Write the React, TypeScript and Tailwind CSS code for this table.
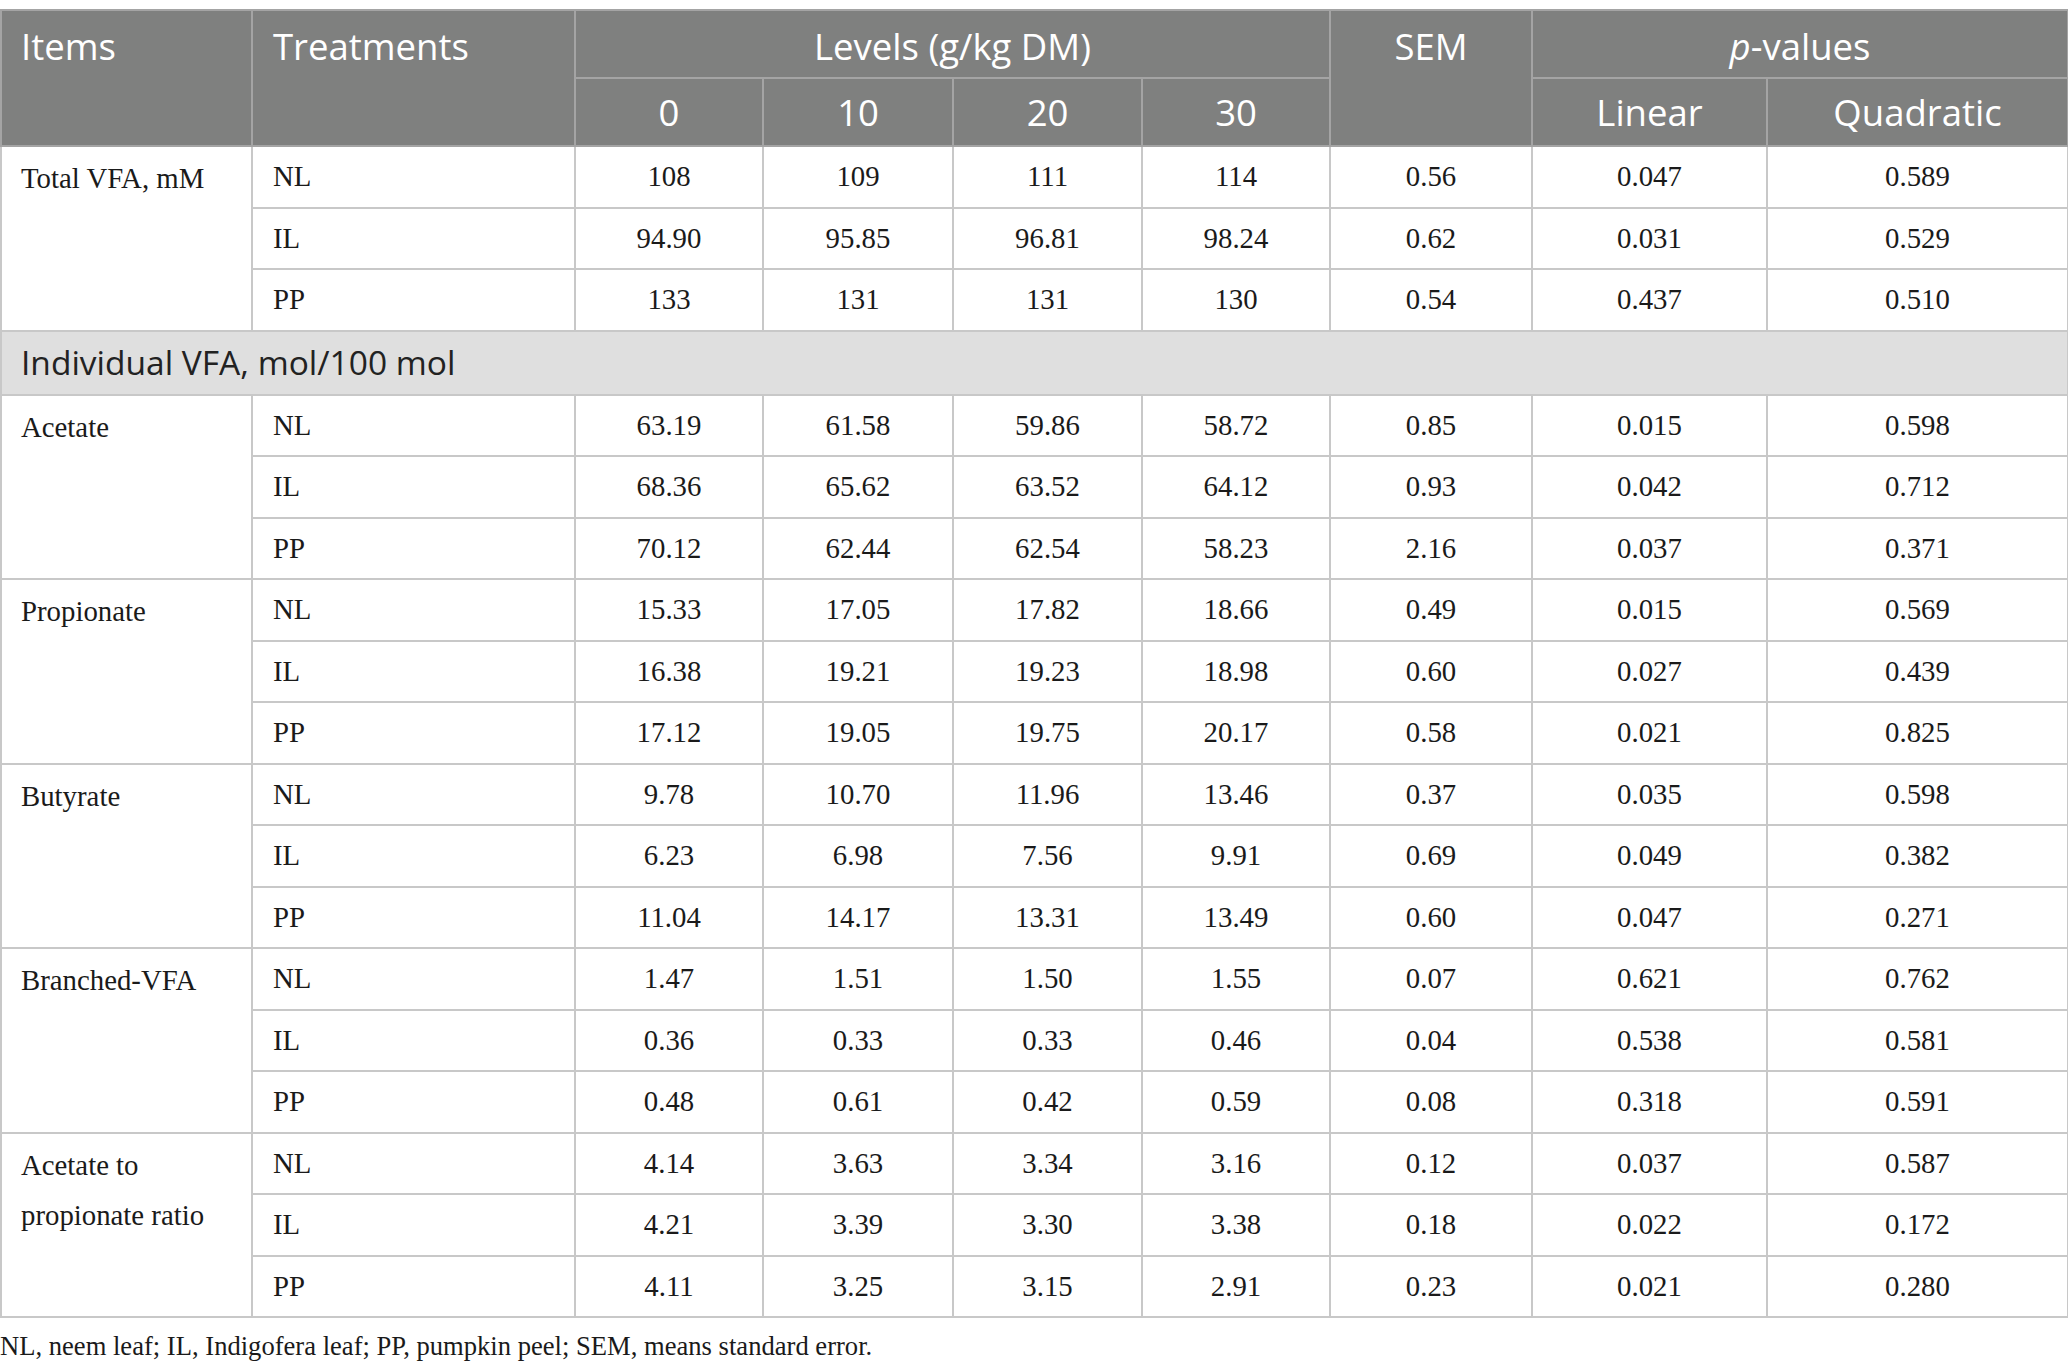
import React from "react";

type Group = { item: string; rows: { t: string; v: string[] }[] };

const TOP: Group[] = [
  {
    item: "Total VFA, mM",
    rows: [
      { t: "NL", v: ["108", "109", "111", "114", "0.56", "0.047", "0.589"] },
      { t: "IL", v: ["94.90", "95.85", "96.81", "98.24", "0.62", "0.031", "0.529"] },
      { t: "PP", v: ["133", "131", "131", "130", "0.54", "0.437", "0.510"] },
    ],
  },
];

const GROUPS: Group[] = [
  {
    item: "Acetate",
    rows: [
      { t: "NL", v: ["63.19", "61.58", "59.86", "58.72", "0.85", "0.015", "0.598"] },
      { t: "IL", v: ["68.36", "65.62", "63.52", "64.12", "0.93", "0.042", "0.712"] },
      { t: "PP", v: ["70.12", "62.44", "62.54", "58.23", "2.16", "0.037", "0.371"] },
    ],
  },
  {
    item: "Propionate",
    rows: [
      { t: "NL", v: ["15.33", "17.05", "17.82", "18.66", "0.49", "0.015", "0.569"] },
      { t: "IL", v: ["16.38", "19.21", "19.23", "18.98", "0.60", "0.027", "0.439"] },
      { t: "PP", v: ["17.12", "19.05", "19.75", "20.17", "0.58", "0.021", "0.825"] },
    ],
  },
  {
    item: "Butyrate",
    rows: [
      { t: "NL", v: ["9.78", "10.70", "11.96", "13.46", "0.37", "0.035", "0.598"] },
      { t: "IL", v: ["6.23", "6.98", "7.56", "9.91", "0.69", "0.049", "0.382"] },
      { t: "PP", v: ["11.04", "14.17", "13.31", "13.49", "0.60", "0.047", "0.271"] },
    ],
  },
  {
    item: "Branched-VFA",
    rows: [
      { t: "NL", v: ["1.47", "1.51", "1.50", "1.55", "0.07", "0.621", "0.762"] },
      { t: "IL", v: ["0.36", "0.33", "0.33", "0.46", "0.04", "0.538", "0.581"] },
      { t: "PP", v: ["0.48", "0.61", "0.42", "0.59", "0.08", "0.318", "0.591"] },
    ],
  },
  {
    item: "Acetate to propionate ratio",
    rows: [
      { t: "NL", v: ["4.14", "3.63", "3.34", "3.16", "0.12", "0.037", "0.587"] },
      { t: "IL", v: ["4.21", "3.39", "3.30", "3.38", "0.18", "0.022", "0.172"] },
      { t: "PP", v: ["4.11", "3.25", "3.15", "2.91", "0.23", "0.021", "0.280"] },
    ],
  },
];

const WIDTHS = [251, 323, 188, 190, 189, 188, 202, 235, 301];

const head = "border-2 border-[#a4a4a4] bg-[#7f807f] font-normal text-white";
const cell = "border-2 border-[#c8c8c8] align-middle";

function Rows({ g }: { g: Group }) {
  return (
    <>
      {g.rows.map((r, i) => (
        <tr key={r.t} className="h-[61.5px]">
          {i === 0 ? (
            <td rowSpan={3} className={`${cell} !align-top px-[19px] pt-[6px] leading-[50px]`}>
              {g.item}
            </td>
          ) : null}
          <td className={`${cell} px-[20px]`}>{r.t}</td>
          {r.v.map((v, j) => (
            <td key={j} className={`${cell} text-center`}>{v}</td>
          ))}
        </tr>
      ))}
    </>
  );
}

export default function App() {
  return (
    <div className="min-h-[1371px] w-[2068px] bg-white pt-[9px]">
      <table
        className="w-[2067px] table-fixed border-collapse text-[28.8px] text-[#1a1a1a]"
        style={{ fontFamily: '"Liberation Serif", "Times New Roman", serif' }}
      >
        <colgroup>
          {WIDTHS.map((w, i) => (
            <col key={i} style={{ width: w }} />
          ))}
        </colgroup>
        <thead style={{ fontFamily: '"Open Sans", "Noto Sans", sans-serif' }} className="text-[36.5px]">
          <tr className="h-[68px]">
            <th rowSpan={2} className={`${head} px-[19px] pt-[3px] text-left align-top leading-[64px]`}>Items</th>
            <th rowSpan={2} className={`${head} px-[20px] pt-[3px] text-left align-top leading-[64px]`}>Treatments</th>
            <th colSpan={4} className={`${head} pt-[3px] text-center leading-[62px]`}>Levels (g/kg DM)</th>
            <th rowSpan={2} className={`${head} pt-[3px] text-center align-top leading-[64px]`}>SEM</th>
            <th colSpan={2} className={`${head} pt-[3px] text-center leading-[62px]`}>
              <i>p</i>-values
            </th>
          </tr>
          <tr className="h-[68px]">
            {["0", "10", "20", "30", "Linear", "Quadratic"].map((h) => (
              <th key={h} className={`${head} text-center leading-[64px]`}>{h}</th>
            ))}
          </tr>
        </thead>
        <tbody>
          {TOP.map((g) => (
            <Rows key={g.item} g={g} />
          ))}
          <tr className="h-[64px]">
            <td
              colSpan={9}
              className="border-2 border-[#c8c8c8] bg-[#dfdfdf] px-[19px] text-[33.5px] text-[#222]"
              style={{ fontFamily: '"Open Sans", "Noto Sans", sans-serif' }}
            >
              Individual VFA, mol/100 mol
            </td>
          </tr>
          {GROUPS.map((g) => (
            <Rows key={g.item} g={g} />
          ))}
        </tbody>
      </table>
      <p
        className="mt-[9px] text-[26.6px] text-[#1a1a1a]"
        style={{ fontFamily: '"Liberation Serif", "Times New Roman", serif' }}
      >
        NL, neem leaf; IL, Indigofera leaf; PP, pumpkin peel; SEM, means standard error.
      </p>
    </div>
  );
}
